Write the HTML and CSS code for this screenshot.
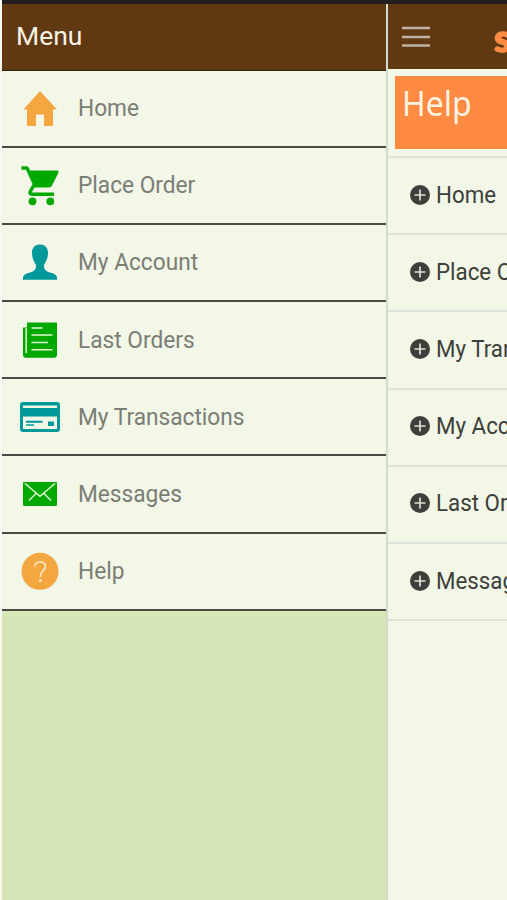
FILE: index.html
```
<!DOCTYPE html>
<html lang="en">
<head>
<meta charset="utf-8">
<title>Menu</title>
<link rel="stylesheet" href="styles.css">
</head>
<body>
<div class="status"></div>
<div class="app">
  <nav class="drawer">
    <header class="drawer-head">Menu</header>
    <ul class="menu">
      <li><svg class="icon" viewBox="0 0 44 44"><path fill="#f4a640" d="M22 5 39 23.500H35V40H26V28.500H18V40H9V23.500H5.500Z"/></svg><span>Home</span></li>
      <li><svg class="icon" viewBox="0 0 44 44"><path fill="none" stroke="#00a800" stroke-width="3.400" stroke-linejoin="round" d="M3.500 5H9L16.500 21 12 29Q11.500 31.300 14 31.300H36"/><path fill="#00a800" d="M9.500 7.500H39.500Q41.300 8 40.300 10L34 22.500Q33 24.500 31 24.500H16.500Z"/><circle cx="14.500" cy="38.300" r="3.900" fill="#00a800"/><circle cx="32.300" cy="38.300" r="3.900" fill="#00a800"/></svg><span>Place Order</span></li>
      <li><svg class="icon" viewBox="0 0 44 44"><path fill="#00999a" d="M22 4.500C27 4.500 30.300 8 30 13.500C29.800 19 27.500 22 26.300 24.500C25.300 28.500 27 31 31 32.300C36 33.700 39 34.800 39 38V39.700H5V38C5 34.800 8 33.700 13 32.300C17 31 18.700 28.500 17.700 24.500C16.500 22 14.200 19 14 13.500C13.700 8 17 4.500 22 4.500Z"/></svg><span>My Account</span></li>
      <li><svg class="icon" viewBox="0 0 44 44"><path fill="#00a800" d="M9 4.500H39V37Q39 39.800 36 39.800H8Q5 39.800 5 37V9.500H9Z"/><path fill="none" stroke="#e4f8d3" stroke-width="1.500" d="M8.200 10V35M13.500 10H24.500M13.500 17H34.500M13.500 24.500H30M13.500 31.800H34.500"/></svg><span>Last Orders</span></li>
      <li><svg class="icon" viewBox="0 0 44 44"><rect x="2" y="7" width="40" height="30" rx="3" fill="#00999a"/><path fill="#f2f7e7" d="M5 10.500H39V13H5ZM5 21.500H39V34H5Z"/><path fill="#00999a" d="M8 25.800H24.500V27.800H8ZM8 29.200H16V30.800H8ZM30 26.500H36V31H30Z"/></svg><span>My Transactions</span></li>
      <li><svg class="icon" viewBox="0 0 44 44"><rect x="5" y="10" width="34" height="24" rx="1" fill="#00a800"/><path fill="none" stroke="#e4f8d3" stroke-width="1.500" d="M7 11.500 22 24.300 37 11.500M18 21.500 11 28.500M26 21.500 33 28.500"/></svg><span>Messages</span></li>
      <li><svg class="icon" viewBox="0 0 44 44"><circle cx="22" cy="22.300" r="18.500" fill="#f4a640"/><path fill="none" stroke="#fae6bd" stroke-width="1.800" d="M16.800 17.500C17 11.500 27.500 11.200 27.500 17.300C27.500 21.500 22.300 21.500 22.300 28"/><circle cx="22.300" cy="31.500" r="1.600" fill="#fae6bd"/></svg><span>Help</span></li>
    </ul>
  </nav>
  <main class="page">
    <header class="bar">
      <svg class="burger" viewBox="0 0 28 22"><path stroke="#bcb1a4" stroke-width="2.600" d="M0 2H28M0 11H28M0 19.500H28"/></svg>
      <span class="brand">s</span>
    </header>
    <h1 class="title"><span>Help</span></h1>
    <ul class="topics">
      <li><svg class="plus" viewBox="0 0 20 20"><circle cx="10" cy="10" r="10" fill="#3d403a"/><path stroke="#dce0d3" stroke-width="1.700" d="M4.500 10H15.500M10 4.500V15.500"/></svg><span>Home</span></li>
      <li><svg class="plus" viewBox="0 0 20 20"><circle cx="10" cy="10" r="10" fill="#3d403a"/><path stroke="#dce0d3" stroke-width="1.700" d="M4.500 10H15.500M10 4.500V15.500"/></svg><span>Place Order</span></li>
      <li><svg class="plus" viewBox="0 0 20 20"><circle cx="10" cy="10" r="10" fill="#3d403a"/><path stroke="#dce0d3" stroke-width="1.700" d="M4.500 10H15.500M10 4.500V15.500"/></svg><span>My Transactions</span></li>
      <li><svg class="plus" viewBox="0 0 20 20"><circle cx="10" cy="10" r="10" fill="#3d403a"/><path stroke="#dce0d3" stroke-width="1.700" d="M4.500 10H15.500M10 4.500V15.500"/></svg><span>My Account</span></li>
      <li><svg class="plus" viewBox="0 0 20 20"><circle cx="10" cy="10" r="10" fill="#3d403a"/><path stroke="#dce0d3" stroke-width="1.700" d="M4.500 10H15.500M10 4.500V15.500"/></svg><span>Last Orders</span></li>
      <li><svg class="plus" viewBox="0 0 20 20"><circle cx="10" cy="10" r="10" fill="#3d403a"/><path stroke="#dce0d3" stroke-width="1.700" d="M4.500 10H15.500M10 4.500V15.500"/></svg><span>Messages</span></li>
    </ul>
  </main>
</div>
</body>
</html>
```
FILE: styles.css
```
* { box-sizing: border-box; }
body {
  margin: 0;
  height: 900px;
  overflow: hidden;
  background: #f8faf1;
  font-family: Roboto, "Liberation Sans", sans-serif;
}
ul { list-style: none; margin: 0; padding: 0; }
.status { height: 4px; margin-left: 2px; background: #231f20; }
.app { display: flex; height: 896px; padding-left: 2px; }
.drawer { flex: 0 0 384px; background: #d6e6b7; }
.drawer-head {
  height: 66.500px;
  padding-left: 14px;
  border-bottom: 1px solid #30200f;
  background: #603913;
  color: #fbf3e4;
  font-size: 26.500px;
  line-height: 63px;
}
.menu li {
  display: flex;
  align-items: center;
  gap: 16px;
  height: 77.200px;
  padding-left: 16px;
  border-bottom: 2px solid #484b43;
  background: #f2f7e7;
  color: #7b7e75;
  font-size: 24px;
  white-space: nowrap;
}
.menu span, .topics span { transform: scaleX(.945); transform-origin: 0 50%; }
.icon { flex: none; width: 44px; height: 44px; }
.page {
  flex: 1;
  min-width: 0;
  overflow: hidden;
  border-left: 2px solid #d3dad0;
  background: #f2f7e7;
}
.bar {
  display: flex;
  align-items: center;
  height: 65px;
  padding-left: 14px;
  background: #603913;
}
.burger { flex: none; width: 28px; height: 22px; }
.brand {
  margin-left: 64px;
  color: #ff8a42;
  font: 900 38px/56px Lato, sans-serif;
  -webkit-text-stroke: 1.500px #ff8a42;
}
.title {
  height: 73px;
  margin: 7px 0 7px 7px;
  padding-left: 7px;
  background: #ff8a42;
  color: #fff3e2;
  font: 400 34px/54px "Noto Sans", sans-serif;
}
.title span { display: inline-block; transform-origin: 0 50%; transform: scaleX(.94); }
.topics { border-top: 2px solid #dde3d8; }
.topics li {
  display: flex;
  align-items: center;
  gap: 6px;
  height: 77.200px;
  padding: 0 0 2px 22px;
  border-bottom: 2px solid #dde3d8;
  color: #3d403a;
  font-size: 24px;
  white-space: nowrap;
}
.topics span { transform: scaleX(.93); }
.plus { flex: none; width: 20px; height: 20px; }
```
